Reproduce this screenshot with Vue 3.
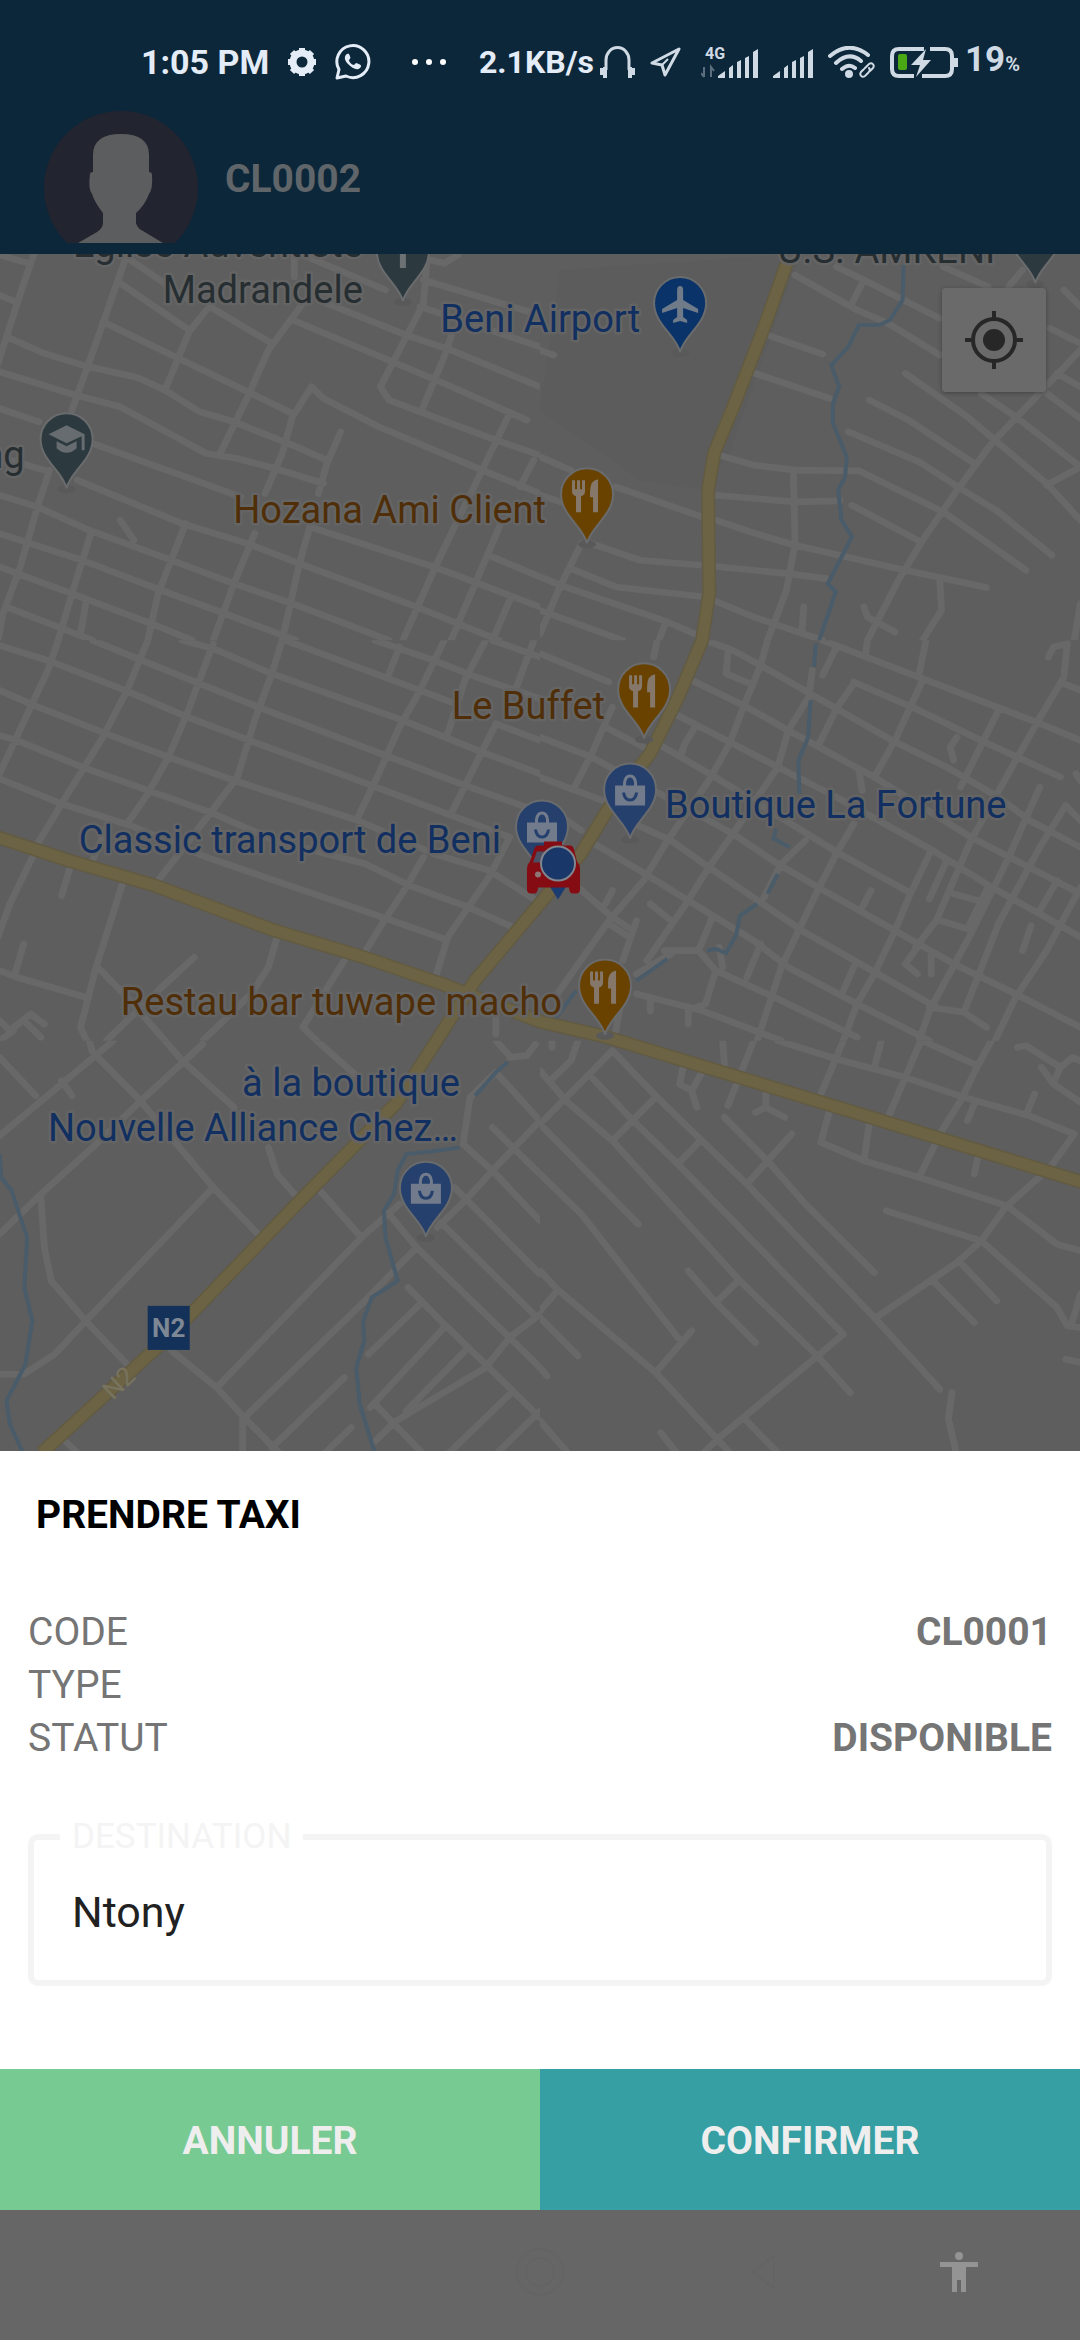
<template>
  <div class="app">
    <header class="header">
      <div class="status">
        <span class="time">1:05 PM</span>
        <svg width="30" height="30" viewBox="0 0 30 30" fill="none" stroke="#e4edf7">
          <circle cx="15" cy="15" r="9" stroke-width="7" />
          <path
            d="M15 1V6M15 24V29M1 15H6M24 15H29M5 5L9 9M21 21L25 25M5 25L9 21M21 9L25 5"
            stroke-width="6"
            stroke-linecap="butt"
          />
        </svg>
        <svg width="36" height="36" viewBox="0 0 36 36" fill="none" stroke="#e4edf7" stroke-width="3" stroke-linejoin="round">
          <path d="M2 34l2-8.500A16 16 0 1 1 11 32z" />
          <path
            d="M12 10c-3 2-3 6 1 10s9 7 12 4c2-2 1-3-1-4l-3-1-2 2c-2 0-5-3-5-5l1.500-2-1-3c-.5-1-1-1.500-2.500-1z"
            fill="#e4edf7"
            stroke="none"
          />
        </svg>
        <div class="status-right">
          <svg class="dots" width="34" height="6" viewBox="0 0 34 6" fill="#fff">
            <circle cx="3" cy="3" r="3" />
            <circle cx="17" cy="3" r="3" />
            <circle cx="31" cy="3" r="3" />
          </svg>
          <div class="pair">
            <span class="speed">2.1KB/s</span>
            <svg width="35" height="32" viewBox="0 0 35 32" fill="none" stroke="#cfdae5" stroke-width="3">
              <path d="M6 24V14A11.500 12.500 0 0 1 29 14V24" />
              <path d="M2 22v7M5 21v11M33 22v7M30 21v11" stroke-width="4" />
            </svg>
          </div>
          <svg class="nav-arrow" width="31" height="30" viewBox="0 0 31 30" fill="none" stroke="#cfdae5" stroke-width="3" stroke-linejoin="round">
            <path d="M29 2L2 16l10 2 3 10z" />
            <path d="M12 18l6-6" stroke-width="2" />
          </svg>
          <svg width="57" height="34" viewBox="0 0 57 34" fill="#cfdae5">
            <text x="4" y="14" font-family="Roboto, sans-serif" font-size="16" font-weight="700">4G</text>
            <path d="M3 22v10M0 28l3 4M10 32v-10l3 4" fill="none" stroke="#5b6f7f" stroke-width="2" />
            <path d="M17 33v-2l7-5v7zM28 33V23l4-3v13zM36 33V17l4-2v18zM44 33V13l4-2v22zM52 33V7l5-3v29z" />
          </svg>
          <svg width="40" height="34" viewBox="0 0 40 34" fill="#cfdae5">
            <path d="M0 33v-2l7-5v7zM11 33V23l4-3v13zM19 33V17l4-2v18zM27 33V13l4-2v22zM35 33V7l5-3v29z" />
          </svg>
          <svg width="47" height="32" viewBox="0 0 47 32" fill="none" stroke="#cfdae5" stroke-width="4" stroke-linecap="round">
            <path d="M2 10Q21-6 40 9M8 17Q21 5 33 15M14 23Q21 17 27 22" />
            <circle cx="21" cy="28" r="2" fill="#cfdae5" />
            <g stroke="#0c2739" stroke-width="6">
              <path d="M37 23l4-4" />
            </g>
            <g stroke-width="2">
              <path d="M37 22l4-4c3-2 6 1 4 4l-3 3M41 22c2 2 0 4-1 5l-3 3c-3 2-6-1-4-4l3-3" />
            </g>
          </svg>
          <div class="pair">
            <svg width="69" height="34" viewBox="0 0 69 34" fill="none" stroke="#cfdae5" stroke-width="4">
              <path d="M24 31H9q-7 0-7-7V11q0-7 7-7h25M40 4h15q7 0 7 7v13q0 7-7 7H32" />
              <rect x="8" y="9" width="9" height="16" rx="2" fill="#49a814" stroke="none" />
              <path d="M66 13v9" />
              <path d="M36 4L21 20h9l-4 12L41 15h-8z" fill="#cfdae5" stroke="none" />
            </svg>
            <span class="battery">19<small>%</small></span>
          </div>
        </div>
      </div>

      <div class="profile">
        <svg width="154" height="132" viewBox="0 0 154 132">
          <circle cx="77" cy="77" r="77" fill="#222430" />
          <path
            fill="#5c5d5e"
            d="M34 132L53 121Q59 117 59 112V102Q51 92 48 83Q44 78 46 63Q46 61 49 61V44Q49 23 77 23Q105 23 105 44V61Q108 61 108 64Q109 78 105 83Q101 94 92 102V112Q93 117 99 120L119 132z"
          />
        </svg>
        <strong>CL0002</strong>
      </div>
    </header>

    <main class="map">
      <svg class="map-canvas" viewBox="0 254 1080 1196" preserveAspectRatio="xMidYMin slice">
        <path d="M560 270L800 254L730 450L705 490L640 480L540 410Z" fill="#5c5c5c" />

        <!-- roads first, then rivers, highways on top -->
        <g v-for="layer in layers" :key="layer" :class="layer">
          <svg
            v-for="tile in tiles"
            :key="tile.x + '-' + tile.y"
            class="tile"
            :x="tile.x"
            :y="tile.y"
            width="540"
            :height="tile.height"
            :viewBox="'0 0 1568 ' + tile.height * 3"
            preserveAspectRatio="none"
          >
            <path v-if="tile[layer]" :d="tile[layer]" />
          </svg>
        </g>
        <path class="highway-edge" :d="highway" />
        <path class="highway" :d="highway" />

        <text class="road-name" x="119" y="1391" transform="rotate(-44 119 1382)">N2</text>
        <rect x="148" y="1305" width="42" height="44" fill="#14315a" />
        <text class="shield" x="169" y="1336">N2</text>

        <g v-for="pin in pins" :key="pin.x" :transform="'translate(' + pin.x + ' ' + pin.y + ')'">
          <ellipse cx="0" cy="1" rx="9" ry="4" fill="#595959" />
          <path
            d="M0 0C-4-17-26-28-26-49A26 26 0 1 1 26-49C26-28 4-17 0 0Z"
            :fill="pin.color"
            stroke="#696b6d"
            stroke-width="2"
          />
          <path :d="icons[pin.icon]" :fill="pin.iconColor" fill-rule="evenodd" />
        </g>

        <text
          v-for="label in labels"
          :key="label.text"
          class="label"
          :x="label.x"
          :y="label.y"
          :fill="label.color"
          :text-anchor="label.anchor || 'end'"
        >{{ label.text }}</text>

        <!-- taxi and current position -->
        <path d="M546 880L558 899L570 880Z" fill="#1b3c70" />
        <path
          d="M544 845v-4h18v4h8q3 0 4 4l3 12q3 3 3 7v21q0 4-4 4h-3q-4 0-4-6h-31q0 6-4 6h-3q-4 0-4-4v-21q0-4 3-7l4-12q1-4 5-4z"
          fill="#850c12"
        />
        <path d="M537 851h10l-6 11h-8z" fill="#4a4f63" />
        <circle cx="538" cy="874" r="3" fill="#8d7674" />
        <circle cx="558" cy="863" r="17" fill="#193768" stroke="#81868e" stroke-width="2" />
      </svg>

      <button class="locate" type="button" aria-label="Ma position">
        <svg width="60" height="60" viewBox="0 0 60 60" fill="none" stroke="#272727" stroke-width="4">
          <circle cx="30" cy="30" r="21" />
          <circle cx="30" cy="30" r="11" fill="#272727" stroke="none" />
          <path d="M30 1v9M30 50v9M1 30h8M51 30h8" />
        </svg>
      </button>
    </main>

    <section class="sheet">
      <h1>PRENDRE TAXI</h1>

      <dl class="infos">
        <div v-for="info in infos" :key="info.name" class="info">
          <dt>{{ info.name }}</dt>
          <dd>{{ info.value }}</dd>
        </div>
      </dl>

      <fieldset class="field">
        <legend><label for="destination">DESTINATION</label></legend>
        <input id="destination" v-model="destination" type="text" />
      </fieldset>

      <div class="actions">
        <button class="cancel" type="button" @click="destination = ''">ANNULER</button>
        <button class="confirm" type="button">CONFIRMER</button>
      </div>
    </section>

    <nav class="navbar">
      <button type="button" aria-label="Accueil">
        <svg width="52" height="52" viewBox="0 0 52 52" fill="none" stroke="#646464" stroke-width="2">
          <circle cx="26" cy="26" r="23" />
          <circle cx="26" cy="26" r="14" />
        </svg>
      </button>
      <button type="button" aria-label="Retour">
        <svg width="30" height="40" viewBox="0 0 30 40" fill="none" stroke="#646464" stroke-width="2">
          <path d="M26 4V36L4 20Z" />
        </svg>
      </button>
      <button class="access" type="button" aria-label="Accessibilité">
        <svg width="38" height="42" viewBox="0 0 38 42" fill="#949494">
          <circle cx="19" cy="5" r="4" />
          <path d="M0 11H38V16H26V41H21V29H17V41H12V16H0Z" />
        </svg>
      </button>
    </nav>
  </div>
</template>

<script setup>
import { ref } from "vue";

const destination = ref("Ntony");

const infos = [
  { name: "CODE", value: "CL0001" },
  { name: "TYPE", value: "" },
  { name: "STATUT", value: "DISPONIBLE" },
];

/* map */

const layers = ["roads", "rivers"];

const GREY = "#262e31";
const BLUE = "#112f60";
const BROWN = "#4f2e08";

const labels = [
  { text: "Église Adventiste", x: 363, y: 257, color: GREY },
  { text: "Madrandele", x: 363, y: 303, color: GREY },
  { text: "U.S. AMKENI", x: 995, y: 263, color: GREY },
  { text: "Beni Airport", x: 640, y: 332, color: BLUE },
  { text: "ng", x: 25, y: 468, color: GREY },
  { text: "Hozana Ami Client", x: 546, y: 523, color: BROWN },
  { text: "Le Buffet", x: 605, y: 719, color: BROWN },
  { text: "Boutique La Fortune", x: 665, y: 818, color: BLUE, anchor: "start" },
  { text: "Classic transport de Beni", x: 501, y: 853, color: BLUE },
  { text: "Restau bar tuwape macho", x: 562, y: 1014, color: BROWN },
  { text: "à la boutique", x: 460, y: 1095, color: BLUE },
  { text: "Nouvelle Alliance Chez…", x: 458, y: 1140, color: BLUE },
];

const pins = [
  { x: 403, y: 301, icon: "church", color: "#2c393e", iconColor: "#6c7173" },
  { x: 1035, y: 283, icon: "church", color: "#2c393e", iconColor: "#6c7173" },
  { x: 680, y: 352, icon: "plane", color: "#0a3369", iconColor: "#707b8a" },
  { x: 67, y: 488, icon: "school", color: "#2c393e", iconColor: "#666c6f" },
  { x: 587, y: 543, icon: "food", color: "#694200", iconColor: "#85786a" },
  { x: 644, y: 738, icon: "food", color: "#694200", iconColor: "#85786a" },
  { x: 630, y: 838, icon: "bag", color: "#26406e", iconColor: "#717b8c" },
  { x: 542, y: 875, icon: "bag", color: "#26406e", iconColor: "#717b8c" },
  { x: 605, y: 1034, icon: "food", color: "#694200", iconColor: "#85786a" },
  { x: 426, y: 1236, icon: "bag", color: "#26406e", iconColor: "#717b8c" },
];

// drawn around the tip of the pin
const icons = {
  church: "M-3-66h6v7h6v6h-6v20h-6v-20h-6v-6h6z",
  plane:
    "M-3-62Q-3-66 0-66Q3-66 3-62V-52L18-43V-39L3-44V-35L7-32V-29L0-31L-7-29V-32L-3-35V-44L-18-39V-43L-3-52Z",
  school:
    "M0-63L18-54V-38H15V-52L0-45L-18-54ZM-10-47L0-42L10-47V-40Q0-31-10-40Z",
  food:
    "M-15-63h3v9h2v-9h3v9h2v-9h3v11q0 4-4 5v16h-5v-16q-4-1-4-5zM3-52q0-11 8-12v33h-5v-15h-3z",
  bag:
    "M-15-53h8v-3q1-8 7-8t7 8v3h8v20h-30zM-4-53h8v-3q-1-5-4-5t-4 5zM-8-46q1 9 8 9t8-9h-3q-1 6-5 6t-5-6z",
};

const highway =
  "M787 262L764 327L733 407L714 453L708 490L709 593L702 640L678 697L650 753L609 807L581 853L540 903" +
  "L475 980L436 1041L396 1103L303 1197L172 1333L42 1452" +
  "M-4 836L69 860L155 885L275 930L365 957L441 983L540 1021L605 1036L826 1103L1084 1182";

const tiles = [
  {
    x: 0,
    y: 240,
    height: 400,
    roads:
      "M100 42L70 130L20 290L-5 370M370 42L300 250L210 510M0 45L85 70M0 165L45 185" +
      "M20 290L130 340L250 378L400 412L480 450L580 515L680 545L850 615L950 660" +
      "M0 395L220 465L350 500L600 640L690 655L800 685L940 730M0 505L115 545M270 610L700 770M0 650L130 690" +
      "M380 60L550 180M350 130L550 270M300 245L520 355L850 520M610 200L790 310M600 210L550 275L480 450" +
      "M855 45V110M880 190L780 330L720 470L640 640M880 45L1120 150M1230 120L1568 225" +
      "M850 240L1140 365L1290 430L1530 540M950 190L1180 285L1310 330L1568 440" +
      "M1240 60L1230 190L1105 440L1130 480L1220 515L1440 600L1568 645M1310 290L1290 350L1225 510M1220 200L1568 320" +
      "M905 440L850 530L820 640L770 760M905 440L940 475L1100 560L1400 690L1568 760M990 575L950 670L925 760" +
      "M1480 520L1400 690L1315 870L1260 990L1170 1200M1550 660L1510 740M1450 860L1380 1030L1310 1200M1430 950L1568 1010" +
      "M225 720L530 850L720 910L870 970L1210 1100L1450 1200" +
      "M0 765L110 800L260 870L500 960L680 1030L850 1090L1130 1200M0 880L240 960L470 1050L640 1115L860 1200" +
      "M0 980L210 1060L440 1150L560 1200M20 1100L170 1160L270 1200M900 860L1260 980L1390 1030L1568 1100" +
      "M145 690L110 800L60 980L10 1120L-5 1200M265 880L210 1060L170 1200M250 1090L235 1180M540 850L460 1060L430 1200" +
      "M740 880L680 1030L620 1200M900 860L870 970L820 1200M350 840L390 900M1480 1080L1430 1200M1250 60L1290 70L1330 45",
  },
  {
    x: 540,
    y: 240,
    height: 400,
    roads:
      "M0 330L40 345M0 650L90 690M220 740L470 830M510 840L610 875L740 915L1060 990L1295 1042M0 765L60 785" +
      "M150 910L290 960L470 975L720 1000L830 1015M90 985L220 1040L480 1070L620 1130L820 1200" +
      "M0 1010L60 1035L370 1145L480 1195M120 910L60 1035L0 1180M0 1110L240 1200M365 1145L345 1200" +
      "M520 645L620 675L740 690L925 692L1170 815L1410 990M510 765L740 785L870 782M735 695L740 910L715 1050L660 1200" +
      "M660 285L820 342M610 395L840 475M740 105L920 210L1010 250L1160 345M860 80L950 125L1160 235M940 120L905 190" +
      "M1170 80L1300 140M1400 90L1360 140M1520 150L1568 200M1480 265L1568 310" +
      "M1568 330L1430 480L1310 610L1210 750L1110 900L1040 1020L950 1200M1060 400L1240 530L1320 600L1470 730L1568 840" +
      "M1280 460L1380 530L1568 680M955 480L1070 540L1260 670M895 575L1100 665L1220 745L1330 815L1485 945" +
      "M905 795L1105 905M1470 460L1568 535M1500 400L1568 440M1470 735L1568 680M1160 1020L1165 1110L1110 1200" +
      "M1568 1090L1550 1200M765 1100L760 1170M940 1100L950 1130L1030 1175",
    rivers:
      "M1055 75L1052 180L1015 240L985 255H925L895 320L845 375L868 440L850 490V550L890 650L885 710L865 750L875 840L905 890L835 1030L858 1055L810 1200",
  },
  {
    x: 0,
    y: 640,
    height: 400,
    roads:
      "M0 15L145 62L365 150L540 228L725 300L1085 437L1310 525L1480 590M270 0L400 55L580 130L750 200L1120 345L1350 435L1568 515" +
      "M530 0L620 25L790 100L1170 240L1400 335L1568 400M830 0L1220 150L1310 185M1440 250L1568 300" +
      "M1090 0L1260 60L1370 105L1568 175M1430 0L1568 50M0 150L100 195L310 280L490 350L680 420L1040 540L1260 640L1420 690L1550 775" +
      "M0 285L50 300L240 380L430 450L610 515L800 600L1060 670L1190 735L1360 800L1490 860" +
      "M0 415L180 490L380 555L600 650L1110 830L1290 895M170 0L140 90L90 200L0 400M430 0L370 150L300 290L180 490L110 610" +
      "M620 10L540 230L490 350L430 460L370 550M820 0L790 100L740 240L690 410L610 520L460 720M1160 20L1130 100" +
      "M1290 0L1220 150L1160 260L1100 400L1040 530M1410 0L1350 120L1300 280M1550 0L1500 140M1440 250L1310 520" +
      "M1230 650L1180 740L1110 850L1060 935M1480 590L1420 710L1300 890L1265 1010M100 640L30 790L-5 890M205 680L180 765" +
      "M355 735L280 980L235 1160L270 1240M70 910L45 1000M0 990L50 1010L250 1070M290 985L370 1070L480 1200" +
      "M565 950L470 1040L310 1200M805 890L780 980L730 1060L590 1200M1000 960L940 1060L880 1160L920 1200" +
      "M0 1140L30 1170L90 1120L130 1150M80 1150L120 1190M1440 1130V1180M0 1200L40 1170M310 560L270 660",
  },
  {
    x: 540,
    y: 640,
    height: 400,
    roads:
      "M480 0L560 30L640 75L860 205L1030 305L1180 380L1330 470L1420 540L1568 620M820 0L1110 115L1440 245L1568 300" +
      "M910 125L1090 205L1280 300L1510 410M440 120L600 200L720 270L970 410L1250 590L1568 760" +
      "M390 220L560 310L690 380L860 470L1140 630L1310 740L1450 820L1568 890M350 315L500 405L870 640L1070 755" +
      "M330 450L560 580L690 670L815 745L1030 870L1210 975L1380 1060L1568 1160" +
      "M270 548L380 600L490 680L760 870L980 1000L1150 1100M150 605L305 700L430 780L620 900L720 980L920 1090L1130 1200" +
      "M110 740L210 830L270 870M360 930H460L510 990L680 1070L920 1190" +
      "M660 0L640 75L590 200L550 310L490 420L370 600L300 720L200 840L50 1060" +
      "M790 90L780 170L720 270L690 380L560 580L490 680L430 780L310 960M910 130L860 205L810 310M910 550L860 640L810 740L700 980L630 1200" +
      "M1110 120L1030 300L970 410M1330 210L1220 440M1130 640L1070 770L1030 870L970 1000L920 1090L880 1200" +
      "M545 40L540 100L610 130M450 260L420 310L410 340M860 20L820 105M950 0L945 40M340 0L330 50M0 40L200 125" +
      "M210 200L150 340L100 440M0 290L150 350L220 390M0 410L180 480M190 260L300 320M50 520L120 570" +
      "M1120 0L1100 100M1475 50L1490 20L1530 10L1520 110L1440 250L1310 490L1250 600L1150 840L1090 920M1520 130L1568 150" +
      "M1210 290L1190 320L1200 360M925 390L935 450M1450 440L1360 650L1250 880L1130 1110L1100 1200" +
      "M1568 540L1525 495L1450 620L1330 850L1230 1115M1568 740L1470 930L1380 1070L1320 1200M1500 720L1450 810M1425 855L1400 930" +
      "M1160 840L1240 865L1300 740M1200 760L1270 780M1130 775L1180 660M1095 920L1060 970L1095 1000M1135 940V1000" +
      "M960 750L935 800M320 790L380 840M210 750L190 790M280 840L240 960M200 850L260 890M500 830L460 930M640 910L600 1010" +
      "M520 920L530 980M910 980L880 1050M510 990L480 1090L430 1110V1150M280 1060L470 1110L700 1200M320 1070V1110" +
      "M1130 1100L1230 1115L1295 1160M240 1060L220 1170M380 940L280 1000M770 600L700 670L650 770M1555 400L1568 420",
    rivers:
      "M800 10L795 80M785 180L778 290L750 360L752 460M685 565L678 595L725 620M690 700L660 760M630 790L580 825L570 880L540 938L510 925L485 930M370 955L280 1020M105 1050L40 1140",
  },
  {
    x: 0,
    y: 1040,
    height: 420,
    roads:
      "M0 50L105 165M0 285L330 0M180 120L210 165M260 0L270 35L400 170L620 440L750 580M480 0L530 60L680 200" +
      "M590 10L400 190L270 320L120 460L0 580M120 470L130 620L150 720L250 840L370 970M620 440L250 840L160 940L70 1000H0" +
      "M920 0L1030 100M780 320L805 400L860 465M930 450L1050 590M1160 490L1050 590L630 1040" +
      "M500 930L630 1040L710 1130L810 1235M705 1130V1240M1210 620L1060 780L720 1120M1130 520L1210 620L1480 890L1568 980" +
      "M1000 1010L790 1220M1020 1160L940 1240M1185 740L1290 850L1410 970L1568 1130M1220 790L1070 940M1290 860L1075 1100" +
      "M1568 820L1480 890L1410 980L1150 1140L1090 1200M1350 930L1180 1110M1090 1090L1230 1240M1480 1060L1300 1240M1568 1110L1440 1240" +
      "M1568 240L1430 390L1350 480L1270 560M1280 545L1550 820M1320 440L1568 700M1430 260L1568 400" +
      "M1568 240L1440 95L1365 170L1345 310L1430 390L1568 540M1440 0L1475 40M1480 50L1530 45L1555 10M190 1200L230 1240",
    rivers:
      "M0 340L5 410L35 450L80 590L72 740L95 840L75 970L20 1080L30 1150L70 1240" +
      "M1475 65L1440 95L1380 165M1335 320L1250 332L1180 340L1155 390L1145 460L1115 510L1120 590L1155 720L1080 770L1055 840L1058 900L1035 980L1045 1090L1090 1240",
  },
  {
    x: 540,
    y: 1040,
    height: 420,
    roads:
      "M110 0L90 60L30 120M35 -40V20M0 90L75 180L210 300L580 720L800 940L900 1055M210 30L0 250L285 550M0 400L120 520L400 890M440 870L335 995" +
      "M210 30L340 170L470 300L600 430L970 830L1160 1045M150 110L270 240L400 370L880 880L800 950L520 1190L480 1230" +
      "M335 170L210 300M465 300L400 370M535 230L660 360L770 490L970 695M730 280L600 430M430 690L510 785L625 905M575 720L510 785" +
      "M0 690L50 745L335 995L555 1240M50 750L0 810M0 830L110 945M0 980L20 1005M0 1140L80 1235M350 1175L400 1240M595 1135L690 1235" +
      "M415 80L405 130L440 150L470 95M440 150L455 200M620 0L545 195M530 0L535 70M655 150V200L625 215M655 200L710 230" +
      "M690 0L860 55L1060 110L1230 170L1420 225L1550 280L1480 380L1350 500L1280 600L1210 665L975 830" +
      "M880 0L815 160M990 0L970 80M1105 0L1060 110L1010 230M1110 0L1270 75L1310 0M1270 75L1220 180L1160 280L1100 410" +
      "M840 210L815 305L940 360L1100 410L1355 495L1500 610L1568 630M955 250L940 360M1005 510L1280 600L1500 800L1530 855L1568 860" +
      "M1568 760L1545 840M1215 660L1325 780M1140 720L1260 845M1195 1055L1185 1135L1205 1225M1270 350L1260 400M1260 190L1240 240" +
      "M1435 160L1415 210M1385 20L1410 15L1510 80L1545 50L1568 60M1455 80L1490 130L1568 185M1510 80L1490 125M1525 955L1568 965",
  },
];
</script>

<style>
body {
  margin: 0;
  background: #666;
}
</style>

<style scoped>
.app {
  display: flex;
  flex-direction: column;
  min-height: 100vh;
  font-family: Roboto, "Liberation Sans", sans-serif;
  font-size: 39px;
  line-height: 53px;
}

button {
  border: none;
  padding: 0;
  background: none;
  font: inherit;
  cursor: pointer;
}

svg {
  display: block;
  flex: none;
}

/* header */

.header {
  background: #0c2739;
  padding-bottom: 11px;
}

.status {
  display: flex;
  align-items: center;
  gap: 18px;
  height: 44px;
  padding: 40px 60px 27px 141px;
  color: #e4edf7;
  font-size: 34px;
  font-weight: 700;
  white-space: nowrap;
}

.status-right {
  display: flex;
  align-items: center;
  gap: 15px;
  margin-left: auto;
}

.dots {
  margin-right: 18px;
}

.nav-arrow {
  margin-right: 5px;
}

.pair {
  display: flex;
  align-items: center;
  gap: 6px;
}

.speed {
  font-size: 32px;
}

.battery {
  color: #cfdae5;
  font-size: 35px;

  small {
    font-size: 20px;
  }
}

.profile {
  display: flex;
  align-items: center;
  gap: 27px;
  padding-left: 44px;
  color: #5f6569;

  strong {
    padding-top: 4px;
  }
}

/* map */

.map {
  position: relative;
  flex: 1;
  min-height: 600px;
  background: #5e5e5e;
  overflow: hidden;
}

.map-canvas {
  position: absolute;
  width: 100%;
  height: 100%;
}

.tile {
  overflow: hidden;
}

.roads {
  fill: none;
  stroke: #686868;
  stroke-width: 20;
  stroke-linejoin: round;
  stroke-linecap: round;
}

.rivers {
  fill: none;
  stroke: #4a5c69;
  stroke-width: 12;
  stroke-linejoin: round;
}

.highway {
  fill: none;
  stroke: #6c6345;
  stroke-width: 11;
  stroke-linejoin: round;
}

.highway-edge {
  fill: none;
  stroke: #625b42;
  stroke-width: 14;
  stroke-linejoin: round;
}

.label {
  font-size: 38px;
  stroke: #646464;
  stroke-width: 5px;
  stroke-linejoin: round;
  paint-order: stroke;
}

.road-name {
  fill: #77735f;
  font-size: 26px;
  text-anchor: middle;
}

.shield {
  fill: #7d8894;
  font-size: 26px;
  font-weight: 700;
  text-anchor: middle;
}

.locate {
  position: absolute;
  top: 34px;
  right: 34px;
  display: flex;
  align-items: center;
  justify-content: center;
  width: 104px;
  height: 104px;
  border-radius: 4px;
  background: rgba(107, 107, 107, 0.9);
  box-shadow: 0 1px 4px rgba(0, 0, 0, 0.3);
}

/* bottom sheet */

.sheet {
  padding-top: 38px;
  background: #fff;

  h1 {
    margin: 0 36px 64px;
    color: #000;
    font-size: 39px;
    font-weight: 700;
  }
}

.infos {
  margin: 0 28px 53px;
  color: #757575;
}

.info {
  display: flex;
  justify-content: space-between;

  dd {
    margin: 0;
    font-weight: 700;
  }
}

.field {
  min-width: 0;
  margin: 0 28px 83px;
  padding: 0 38px 28px;
  border: 6px solid #f4f4f4;
  border-radius: 10px;

  legend {
    margin-left: -12px;
    padding: 0 12px;
    color: #f4f4f4;
    font-size: 35px;
    line-height: 38px;
  }

  input {
    display: block;
    box-sizing: border-box;
    width: 100%;
    height: 96px;
    border: none;
    padding: 16px 0 0;
    outline: none;
    background: none;
    color: #212121;
    font: inherit;
    font-size: 43px;
  }
}

.actions {
  display: grid;
  grid-template-columns: 1fr 1fr;

  button {
    height: 141px;
    padding-top: 4px;
    color: #eee;
    font-weight: 700;
  }

  .cancel {
    background: #78ca93;
  }

  .confirm {
    background: #359fa3;
  }
}

/* system bar */

.navbar {
  display: flex;
  justify-content: flex-end;
  height: 130px;
  padding: 0 37px 0 0;
  background: #666;

  button {
    display: flex;
    align-items: center;
    justify-content: center;
    width: 223px;
    padding-bottom: 6px;
  }

  .access {
    width: 169px;
  }
}
</style>
